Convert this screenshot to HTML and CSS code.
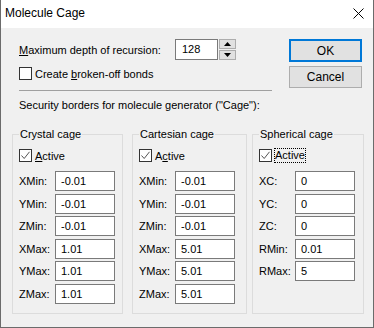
FILE: index.html
```html
<!DOCTYPE html>
<html>
<head>
<meta charset="utf-8">
<link rel="stylesheet" href="styles.css">
</head>
<body>
<div class="window">
  <div class="titlebar">
    <span class="title">Molecule Cage</span>
    <svg class="close" width="11" height="11" viewBox="0 0 11 11"><path d="M0.5 0.5 L10.5 10.5 M10.5 0.5 L0.5 10.5" stroke="#000" stroke-width="1" fill="none"/></svg>
  </div>
  <div class="content">
    <div class="top">
      <div class="left">
        <div class="depth-row">
          <span class="depth-label"><u>M</u>aximum depth of recursion:</span>
          <div class="spin">
            <div class="spin-input">128</div>
            <div class="spin-btns">
              <div class="spin-btn"><svg width="7" height="4" viewBox="0 0 7 4"><path d="M3.5 0 L7 4 L0 4 Z" fill="#000"/></svg></div>
              <div class="spin-btn"><svg width="7" height="4" viewBox="0 0 7 4"><path d="M0 0 L7 0 L3.5 4 Z" fill="#000"/></svg></div>
            </div>
          </div>
        </div>
        <div class="check-row">
          <span class="box"></span>
          <span>Create <u>b</u>roken-off bonds</span>
        </div>
        <div class="sep"></div>
        <div class="security">Security borders for molecule generator ("Cage"):</div>
      </div>
      <div class="buttons">
        <div class="btn btn-default">OK</div>
        <div class="btn">Cancel</div>
      </div>
    </div>
    <div class="groups">
      <fieldset class="group g1">
        <legend>Crystal cage</legend>
        <div class="check-row active-row"><span class="box checked"><svg width="11" height="11" viewBox="0 0 11 11"><path d="M1.5 5.5 L4.2 8.5 L9.5 1.8" stroke="#555" stroke-width="1" fill="none"/></svg></span><span><u>A</u>ctive</span></div>
        <div class="fields">
          <span class="lbl">XMin:</span><div class="field">-0.01</div>
          <span class="lbl">YMin:</span><div class="field">-0.01</div>
          <span class="lbl">ZMin:</span><div class="field">-0.01</div>
          <span class="lbl">XMax:</span><div class="field">1.01</div>
          <span class="lbl">YMax:</span><div class="field">1.01</div>
          <span class="lbl">ZMax:</span><div class="field">1.01</div>
        </div>
      </fieldset>
      <fieldset class="group g2">
        <legend>Cartesian cage</legend>
        <div class="check-row active-row"><span class="box checked"><svg width="11" height="11" viewBox="0 0 11 11"><path d="M1.5 5.5 L4.2 8.5 L9.5 1.8" stroke="#555" stroke-width="1" fill="none"/></svg></span><span>A<u>c</u>tive</span></div>
        <div class="fields">
          <span class="lbl">XMin:</span><div class="field">-0.01</div>
          <span class="lbl">YMin:</span><div class="field">-0.01</div>
          <span class="lbl">ZMin:</span><div class="field">-0.01</div>
          <span class="lbl">XMax:</span><div class="field">5.01</div>
          <span class="lbl">YMax:</span><div class="field">5.01</div>
          <span class="lbl">ZMax:</span><div class="field">5.01</div>
        </div>
      </fieldset>
      <fieldset class="group g3">
        <legend>Spherical cage</legend>
        <div class="check-row active-row"><span class="box checked"><svg width="11" height="11" viewBox="0 0 11 11"><path d="M1.5 5.5 L4.2 8.5 L9.5 1.8" stroke="#555" stroke-width="1" fill="none"/></svg></span><span class="focus">Active</span></div>
        <div class="fields">
          <span class="lbl">XC:</span><div class="field">0</div>
          <span class="lbl">YC:</span><div class="field">0</div>
          <span class="lbl">ZC:</span><div class="field">0</div>
          <span class="lbl">RMin:</span><div class="field">0.01</div>
          <span class="lbl">RMax:</span><div class="field">5</div>
        </div>
      </fieldset>
    </div>
  </div>
</div>
</body>
</html>
```
FILE: styles.css
```css
* { box-sizing: border-box; }
html, body { margin: 0; padding: 0; }
body {
  background: #3a3a3a;
  font-family: "Liberation Sans", Arial, sans-serif;
  font-size: 11px;
  color: #000;
}
.window {
  width: 374px;
  height: 328px;
  background: #f0f0f0;
  border: 1px solid #6b6b6b;
  border-top: none;
  display: flex;
  flex-direction: column;
}
.titlebar {
  height: 28px;
  background: #fff;
  display: flex;
  align-items: center;
  justify-content: space-between;
  padding: 0 9px 2px 4px;
}
.title { font-size: 12px; line-height: 16px; }
.close { margin-top: 1px; }
.content {
  padding: 11px 0 0 11px;
  display: flex;
  flex-direction: column;
}
.top {
  display: flex;
  justify-content: space-between;
  padding-right: 11px;
  padding-left: 7px;
}
.left { width: 253px; display: flex; flex-direction: column; }
.depth-row {
  display: flex;
  align-items: center;
  height: 21px;
}
.depth-label { width: 156px; white-space: nowrap; }
.spin { display: flex; gap: 1px; }
.spin-input {
  width: 43px;
  height: 21px;
  background: #fff;
  border: 1px solid #7a7a7a;
  padding: 0 0 0 6px;
  line-height: 18px;
}
.spin-btns { display: flex; flex-direction: column; justify-content: space-between; height: 21px; }
.spin-btn {
  width: 17px;
  height: 10px;
  background: #e1e1e1;
  border: 1px solid #adadad;
  display: flex;
  align-items: center;
  justify-content: center;
}
.check-row {
  display: flex;
  align-items: center;
  gap: 3px;
  height: 13px;
  white-space: nowrap;
}
.top .check-row { margin-top: 7px; }
.box {
  width: 13px;
  height: 13px;
  border: 1px solid #333;
  background: #fff;
  display: flex;
  align-items: center;
  justify-content: center;
  flex: none;
}
.sep {
  height: 1px;
  background: #a0a0a0;
  margin-top: 10px;
  width: 253px;
}
.security { margin-top: 6px; line-height: 16px; white-space: nowrap; }
.buttons { display: flex; flex-direction: column; gap: 4px; }
.btn {
  width: 73px;
  height: 22px;
  background: #e1e1e1;
  border: 1px solid #adadad;
  display: flex;
  align-items: center;
  justify-content: center;
  font-size: 12px;
}
.btn-default { border: 2px solid #0078d7; height: 23px; }
.groups {
  display: flex;
  margin-top: 14px;
}
.group {
  margin: 0;
  border: 1px solid #dcdcdc;
  padding: 6px 0 0 6px;
  height: 187px;
  min-width: 0;
}
.group legend {
  padding: 0 1px;
  margin-left: 0;
  line-height: 14px;
  white-space: nowrap;
}
.g1 { width: 111px; margin-right: 9px; }
.g2 { width: 115px; margin-right: 5px; }
.g3 { width: 112px; }
.active-row { height: 13px; margin-top: 2px; }
.focus { outline: 1px dotted #000; outline-offset: 0; line-height: 13px; }
.fields {
  display: grid;
  grid-template-columns: 36px 60px;
  grid-auto-rows: 20px;
  row-gap: 2.6px;
  align-items: center;
  margin-top: 9px;
}
.lbl { line-height: 14px; white-space: nowrap; }
.field {
  height: 20px;
  background: #fff;
  border: 1px solid #7a7a7a;
  padding-left: 5px;
  line-height: 18px;
}
```
